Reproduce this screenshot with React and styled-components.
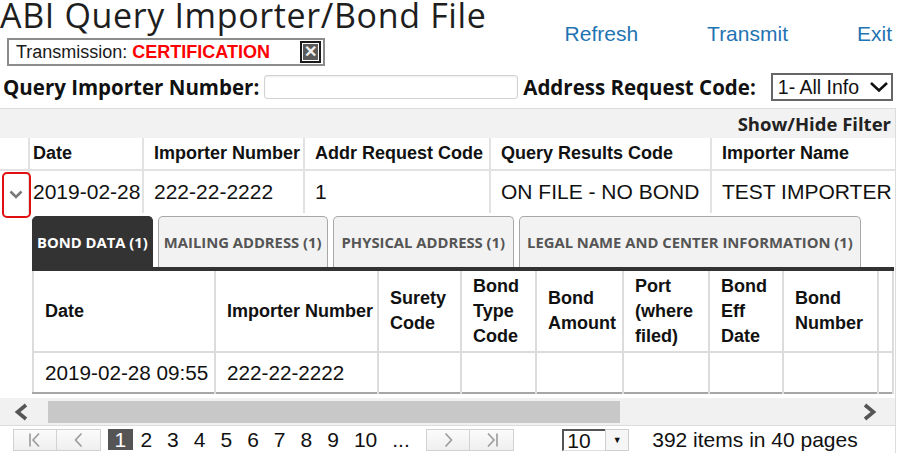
import React from "react";
import styled, { createGlobalStyle } from "styled-components";

const GlobalStyle = createGlobalStyle`
  html, body { margin: 0; padding: 0; background: #fff; }
  body { font-family: "Liberation Sans", Arial, sans-serif; color: #111; }
  *, *::before, *::after { box-sizing: border-box; }
`;

const Page = styled.div`
  width: 900px;
  height: 455px;
  overflow: hidden;
`;

const Header = styled.header`
  display: flex;
  justify-content: space-between;
  align-items: flex-start;
`;

const TitleBlock = styled.div`
  display: flex;
  flex-direction: column;
`;

const Title = styled.h1`
  margin: 0;
  font-family: "Open Sans", sans-serif;
  font-weight: 400;
  font-size: 34px;
  line-height: 31px;
  letter-spacing: 0.65px;
  color: #1e1e1e;
  white-space: nowrap;
`;

const TransBox = styled.div`
  margin: 7px 0 0 7px;
  width: 318px;
  height: 28px;
  border: 2px solid #8c8c8c;
  display: flex;
  align-items: center;
  justify-content: space-between;
  padding: 0 2px 0 7px;
  font-size: 18px;
  white-space: nowrap;
`;

const TransLabel = styled.span`
  color: #1a1a1a;
`;

const TransValue = styled.b`
  color: #f00;
`;

const CloseBtn = styled.span`
  width: 21px;
  height: 22px;
  border: 2px solid #1a1a1a;
  background: #5a5a5a;
  box-shadow: inset 0 0 0 1px #fff;
  color: #eee;
  display: flex;
  align-items: center;
  justify-content: center;
  font-size: 16px;
  font-weight: bold;
  line-height: 1;
`;

const Links = styled.nav`
  display: flex;
  gap: 69px;
  padding: 22px 8px 0 0;
`;

const Link = styled.a`
  font-size: 21px;
  line-height: 24px;
  color: #1f74b3;
  text-decoration: none;
`;

const QueryRow = styled.div`
  margin-top: 6px;
  height: 30px;
  display: flex;
  align-items: center;
`;

const Label = styled.label`
  font-family: "Open Sans", sans-serif;
  font-weight: 700;
  font-size: 20.5px;
  color: #111;
  white-space: nowrap;
  margin-left: ${(p) => p.$ml || 0}px;
`;

const TextInput = styled.input`
  margin-left: 5px;
  width: 254px;
  height: 24px;
  border: 1px solid #d2d2d2;
  border-radius: 3px;
  box-shadow: inset 0 1px 2px rgba(0, 0, 0, 0.08);
  outline: none;
`;

const SelectBox = styled.div`
  margin-left: 15px;
  width: 122px;
  height: 28px;
  border: 2px solid #666;
  display: flex;
  align-items: center;
  justify-content: space-between;
  padding: 0 2px 0 5px;
  font-size: 19.5px;
  color: #111;
`;

const Grid = styled.section`
  margin-top: 6px;
  width: 896px;
  border-top: 1px solid #dcdcdc;
  border-right: 1px solid #dcdcdc;
`;

const Toolbar = styled.div`
  height: 29px;
  background: #f2f2f2;
  display: flex;
  justify-content: flex-end;
  align-items: center;
  padding-right: 4px;
  font-family: "Open Sans", sans-serif;
  font-weight: 700;
  font-size: 18.5px;
  color: #222;
`;

const Table = styled.table`
  border-collapse: collapse;
  table-layout: fixed;
  width: ${(p) => p.$w}px;
`;

const Th = styled.th`
  height: 32px;
  padding: 0 0 0 ${(p) => p.$pl ?? 10}px;
  text-align: left;
  font-size: 18px;
  font-weight: bold;
  color: #111;
  white-space: nowrap;
  overflow: hidden;
  border-left: 2px solid #e2e2e2;
  border-bottom: 2px solid #e2e2e2;
  &:first-child { border-left: none; }
`;

const Td = styled.td`
  height: 43px;
  padding: 0 0 0 ${(p) => p.$pl ?? 10}px;
  font-size: 21px;
  color: #111;
  white-space: nowrap;
  overflow: hidden;
  border-left: 2px solid #e2e2e2;
  &:first-child { border-left: none; }
`;

const ExpandCell = styled.td`
  position: relative;
  padding: 0;
`;

const RedFrame = styled.span`
  position: absolute;
  left: 2px;
  top: 1px;
  width: 29px;
  height: 46px;
  border: 2px solid #e01010;
  border-radius: 5px;
  z-index: 2;
  display: flex;
  justify-content: center;
  padding: 16px 2px 0 0;
  color: #7a7a7a;
`;

const DetailCell = styled.td`
  padding: 3px 2px 0 3px;
`;

const Tabs = styled.div`
  display: flex;
  gap: 5px;
  height: 55px;
  align-items: flex-end;
  border-bottom: 4px solid #333;
`;

const Tab = styled.div`
  height: 51px;
  padding: 0 ${(p) => p.$px}px;
  display: flex;
  align-items: center;
  border: 1px solid ${(p) => (p.$active ? "#333" : "#a8a8a8")};
  border-bottom: none;
  border-radius: 5px 5px 0 0;
  background: ${(p) => (p.$active ? "#333" : "#f2f2f2")};
  color: ${(p) => (p.$active ? "#fff" : "#555")};
  font-family: "Open Sans", sans-serif;
  font-weight: 700;
  font-size: 14.8px;
  white-space: nowrap;
`;

const InnerTable = styled.table`
  border-collapse: collapse;
  table-layout: fixed;
  width: 860px;
  border-left: 2px solid #dcdcdc;
  border-bottom: 2px solid #a6a6a6;
`;

const ITh = styled.th`
  height: 81px;
  padding: 0 2px 0 11px;
  text-align: left;
  vertical-align: middle;
  font-size: 18px;
  line-height: 25px;
  font-weight: bold;
  color: #111;
  border-right: 2px solid #dcdcdc;
  border-bottom: 2px solid #dcdcdc;
`;

const ITd = styled.td`
  height: 41px;
  padding: 0 2px 0 11px;
  font-size: 20.7px;
  color: #111;
  white-space: nowrap;
  overflow: hidden;
  border-right: 2px solid #dcdcdc;
`;

const HScroll = styled.div`
  margin-top: 4px;
  height: 27px;
  background: #f1f1f1;
  display: flex;
  align-items: center;
`;

const ScrollArrow = styled.div`
  width: 45px;
  display: flex;
  justify-content: flex-start;
  color: #555;
  padding-left: ${(p) => (p.$right ? 12 : 13)}px;
`;

const ScrollTrack = styled.div`
  flex: 1;
  height: 22px;
  display: flex;
`;

const ScrollThumb = styled.div`
  margin-left: 3px;
  width: 572px;
  height: 100%;
  background: #c8c8c8;
`;

const Pager = styled.div`
  border-top: 1px solid #dcdcdc;
  height: 28px;
  display: flex;
  align-items: center;
  padding-left: 13px;
`;

const PagerBtn = styled.span`
  width: 44px;
  height: 22px;
  border: 1px solid #d2d2d2;
  background: linear-gradient(#fbfbfb, #efefef);
  display: flex;
  align-items: center;
  justify-content: center;
  color: #9a9a9a;
  & + & { border-left: none; }
`;

const PageList = styled.div`
  display: flex;
  align-items: center;
  margin: 0 9px 0 7px;
`;

const PageNum = styled.span`
  height: 21px;
  padding: 0 ${(p) => (p.$active ? 6.6 : 7.5)}px;
  font-size: 21px;
  line-height: 21px;
  background: ${(p) => (p.$active ? "#555" : "transparent")};
  color: ${(p) => (p.$active ? "#fff" : "#111")};
`;

const PageSize = styled.div`
  margin-left: 48px;
  height: 22px;
  display: flex;
  align-items: stretch;
`;

const PageSizeValue = styled.span`
  width: 43px;
  border-top: 2px solid #555;
  border-left: 2px solid #555;
  border-bottom: 1px solid #ddd;
  padding-left: 3px;
  font-size: 21px;
  line-height: 19px;
`;

const PageSizeBtn = styled.span`
  width: 24px;
  border: 1px solid #cfcfcf;
  background: #f6f6f6;
  display: flex;
  align-items: center;
  justify-content: center;
  font-size: 9px;
  color: #111;
`;

const PagerInfo = styled.span`
  margin-left: 23px;
  font-size: 21px;
`;

const Icon = ({ w = 16, h = 16, sw = 1.6, children }) => (
  <svg
    width={w}
    height={h}
    viewBox={`0 0 ${w} ${h}`}
    fill="none"
    stroke="currentColor"
    strokeWidth={sw}
    strokeLinecap="butt"
    strokeLinejoin="miter"
  >
    {children}
  </svg>
);

const FirstIcon = () => (
  <Icon>
    <path d="M3 1.5v13" />
    <path d="M12 1.5 6 8l6 6.5" />
  </Icon>
);
const PrevIcon = () => (
  <Icon>
    <path d="M10.5 1.5 4.5 8l6 6.5" />
  </Icon>
);
const NextIcon = () => (
  <Icon>
    <path d="M5.5 1.5 11.5 8l-6 6.5" />
  </Icon>
);
const LastIcon = () => (
  <Icon>
    <path d="M4 1.5 10 8l-6 6.5" />
    <path d="M13 1.5v13" />
  </Icon>
);
const SelectChevron = () => (
  <Icon w={20} h={12} sw={2.6}>
    <path d="M2 2l8 7.5L18 2" />
  </Icon>
);
const ExpandChevron = () => (
  <Icon w={14} h={10} sw={2.6}>
    <path d="M1.5 1.5l5.5 5.5 5.5-5.5" />
  </Icon>
);
const ScrollLeft = () => (
  <Icon w={16} h={18} sw={3.6}>
    <path d="M13 2 4.5 9l8.5 7" />
  </Icon>
);
const ScrollRight = () => (
  <Icon w={16} h={18} sw={3.6}>
    <path d="M3 2l8.5 7L3 16" />
  </Icon>
);

const masterCols = [29, 114, 161, 186, 221, 185];
const innerCols = [182, 163, 83, 75, 87, 86, 74, 95, 15];
const innerHeads = [
  "Date",
  "Importer Number",
  "Surety Code",
  "Bond Type Code",
  "Bond Amount",
  "Port (where filed)",
  "Bond Eff Date",
  "Bond Number",
  "",
];
const tabs = [
  { label: "BOND DATA (1)", px: 4 },
  { label: "MAILING ADDRESS (1)", px: 5 },
  { label: "PHYSICAL ADDRESS (1)", px: 8 },
  { label: "LEGAL NAME AND CENTER INFORMATION (1)", px: 7 },
];

export default function App() {
  return (
    <Page>
      <GlobalStyle />
      <Header>
        <TitleBlock>
          <Title>ABI Query Importer/Bond File</Title>
          <TransBox>
            <span>
              <TransLabel>Transmission: </TransLabel>
              <TransValue>CERTIFICATION</TransValue>
            </span>
            <CloseBtn>✕</CloseBtn>
          </TransBox>
        </TitleBlock>
        <Links>
          <Link href="#">Refresh</Link>
          <Link href="#">Transmit</Link>
          <Link href="#">Exit</Link>
        </Links>
      </Header>

      <QueryRow>
        <Label $ml={3}>Query Importer Number:</Label>
        <TextInput />
        <Label $ml={5}>Address Request Code:</Label>
        <SelectBox>
          <span>1- All Info</span>
          <SelectChevron />
        </SelectBox>
      </QueryRow>

      <Grid>
        <Toolbar>Show/Hide Filter</Toolbar>
        <Table $w={896}>
          <colgroup>
            {masterCols.map((w, i) => (
              <col key={i} style={{ width: w }} />
            ))}
          </colgroup>
          <thead>
            <tr>
              <Th />
              <Th $pl={3}>Date</Th>
              <Th>Importer Number</Th>
              <Th>Addr Request Code</Th>
              <Th>Query Results Code</Th>
              <Th>Importer Name</Th>
            </tr>
          </thead>
          <tbody>
            <tr>
              <ExpandCell>
                <RedFrame>
                  <ExpandChevron />
                </RedFrame>
              </ExpandCell>
              <Td $pl={3}>2019-02-28</Td>
              <Td>222-22-2222</Td>
              <Td>1</Td>
              <Td>ON FILE - NO BOND</Td>
              <Td>TEST IMPORTER</Td>
            </tr>
            <tr>
              <td />
              <DetailCell colSpan={5}>
                <Tabs>
                  {tabs.map((t, i) => (
                    <Tab key={t.label} $active={i === 0} $px={t.px}>
                      {t.label}
                    </Tab>
                  ))}
                </Tabs>
                <InnerTable>
                  <colgroup>
                    {innerCols.map((w, i) => (
                      <col key={i} style={{ width: w }} />
                    ))}
                  </colgroup>
                  <thead>
                    <tr>
                      {innerHeads.map((h, i) => (
                        <ITh key={i}>{h}</ITh>
                      ))}
                    </tr>
                  </thead>
                  <tbody>
                    <tr>
                      <ITd>2019-02-28 09:55</ITd>
                      <ITd>222-22-2222</ITd>
                      {innerCols.slice(2).map((_, i) => (
                        <ITd key={i} />
                      ))}
                    </tr>
                  </tbody>
                </InnerTable>
              </DetailCell>
            </tr>
          </tbody>
        </Table>
        <HScroll>
          <ScrollArrow>
            <ScrollLeft />
          </ScrollArrow>
          <ScrollTrack>
            <ScrollThumb />
          </ScrollTrack>
          <ScrollArrow $right>
            <ScrollRight />
          </ScrollArrow>
        </HScroll>
        <Pager>
          <PagerBtn>
            <FirstIcon />
          </PagerBtn>
          <PagerBtn>
            <PrevIcon />
          </PagerBtn>
          <PageList>
            <PageNum $active>1</PageNum>
            {[2, 3, 4, 5, 6, 7, 8, 9, 10].map((n) => (
              <PageNum key={n}>{n}</PageNum>
            ))}
            <PageNum>...</PageNum>
          </PageList>
          <PagerBtn>
            <NextIcon />
          </PagerBtn>
          <PagerBtn>
            <LastIcon />
          </PagerBtn>
          <PageSize>
            <PageSizeValue>10</PageSizeValue>
            <PageSizeBtn>▼</PageSizeBtn>
          </PageSize>
          <PagerInfo>392 items in 40 pages</PagerInfo>
        </Pager>
      </Grid>
    </Page>
  );
}
